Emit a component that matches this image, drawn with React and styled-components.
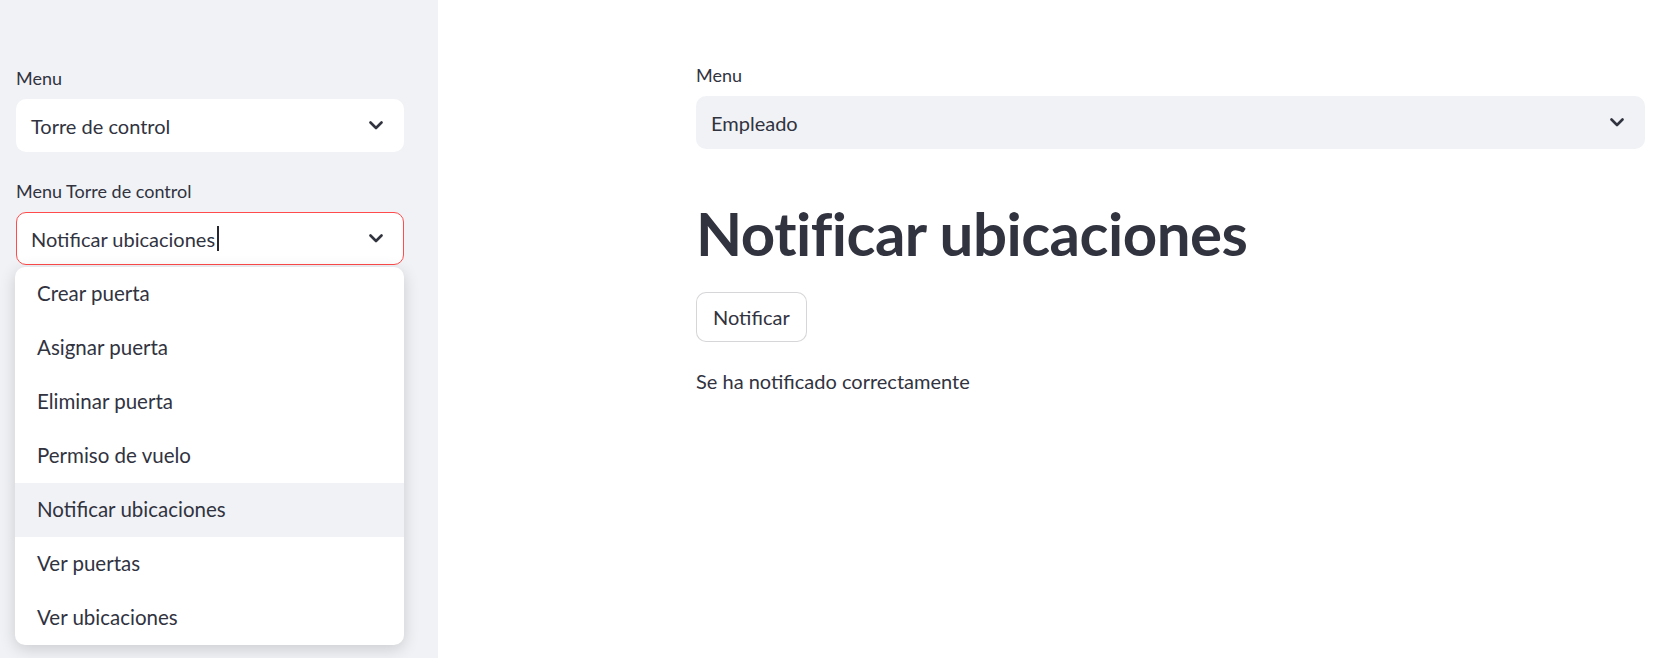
import React from 'react';
import styled, { createGlobalStyle } from 'styled-components';

const GlobalStyle = createGlobalStyle`
  html, body {
    margin: 0;
    padding: 0;
    background: #ffffff;
  }
  body {
    font-family: Lato, "Noto Sans", sans-serif;
    color: #31333f;
  }
`;

const options = [
  'Crear puerta',
  'Asignar puerta',
  'Eliminar puerta',
  'Permiso de vuelo',
  'Notificar ubicaciones',
  'Ver puertas',
  'Ver ubicaciones'
];

const Chevron = () => (
  <svg width="14" height="9" viewBox="0 0 14 9" fill="none">
    <path d="M1.5 1.5 L7 7 L12.5 1.5" stroke="#31333f" strokeWidth="2.6" strokeLinecap="round" strokeLinejoin="round" />
  </svg>
);

const App = () => (
  <Page>
    <GlobalStyle />
    <Sidebar>
      <Field>
        <Label>Menu</Label>
        <Select $variant="sidebar">
          <Value>Torre de control</Value>
          <Chevron />
        </Select>
      </Field>
      <Field>
        <Label>Menu Torre de control</Label>
        <SelectWrap>
          <Select $variant="sidebar" $focused>
            <Value>
              Notificar ubicaciones
              <Caret />
            </Value>
            <Chevron />
          </Select>
          <Dropdown>
            {options.map((opt) => (
              <Option key={opt} $active={opt === 'Notificar ubicaciones'}>
                {opt}
              </Option>
            ))}
          </Dropdown>
        </SelectWrap>
      </Field>
    </Sidebar>
    <Main>
      <Field>
        <Label>Menu</Label>
        <Select $variant="main">
          <Value>Empleado</Value>
          <Chevron />
        </Select>
      </Field>
      <Title>Notificar ubicaciones</Title>
      <Button>Notificar</Button>
      <Text>Se ha notificado correctamente</Text>
    </Main>
  </Page>
);

export default App;

const Page = styled.div`
  display: flex;
  height: 658px;
  overflow: hidden;
`;

const Sidebar = styled.aside`
  width: 438px;
  flex-shrink: 0;
  box-sizing: border-box;
  background: #f0f2f6;
  padding: 64px 34px 0 16px;
  display: flex;
  flex-direction: column;
  gap: 25px;
`;

const Field = styled.div`
  display: flex;
  flex-direction: column;
`;

const Label = styled.label`
  font-size: 18px;
  line-height: 28px;
  margin-bottom: 7px;
  color: #31333f;
`;

const SelectWrap = styled.div`
  position: relative;
`;

const Select = styled.div`
  height: 53px;
  box-sizing: border-box;
  display: flex;
  align-items: center;
  justify-content: space-between;
  padding: 0 20px 0 14px;
  border-radius: 10px;
  background: ${(p) => (p.$variant === 'main' ? '#f0f2f6' : '#ffffff')};
  border: 1px solid ${(p) => (p.$focused ? '#ff4b4b' : 'transparent')};
  font-size: 20px;
`;

const Value = styled.span`
  display: flex;
  align-items: center;
  color: #31333f;
`;

const Caret = styled.span`
  display: inline-block;
  width: 2px;
  height: 25px;
  margin-left: 2px;
  background: #262730;
`;

const Dropdown = styled.ul`
  position: absolute;
  top: 55px;
  left: -1px;
  width: 389px;
  margin: 0;
  padding: 0;
  list-style: none;
  background: #ffffff;
  border-radius: 10px;
  overflow: hidden;
  box-shadow: 0 4px 16px rgba(0, 0, 0, 0.16);
  z-index: 10;
`;

const Option = styled.li`
  height: 54px;
  box-sizing: border-box;
  display: flex;
  align-items: center;
  padding: 0 0 3px 22px;
  font-size: 20.5px;
  color: #31333f;
  background: ${(p) => (p.$active ? '#f0f2f6' : 'transparent')};
`;

const Main = styled.main`
  flex: 1;
  padding: 61px 8px 0 258px;
  display: flex;
  flex-direction: column;
  align-items: stretch;
`;

const Title = styled.h1`
  margin: 44px 0 0;
  font-size: 60px;
  font-weight: 700;
  line-height: 80px;
  color: #31333f;
  letter-spacing: -0.5px;
`;

const Button = styled.button`
  align-self: flex-start;
  margin-top: 19px;
  height: 50px;
  padding: 0 16px;
  border: 1px solid rgba(49, 51, 63, 0.2);
  border-radius: 10px;
  background: #ffffff;
  font-family: inherit;
  font-size: 20px;
  color: #31333f;
`;

const Text = styled.p`
  margin: 23px 0 0;
  font-size: 20px;
  line-height: 32px;
  color: #31333f;
`;
